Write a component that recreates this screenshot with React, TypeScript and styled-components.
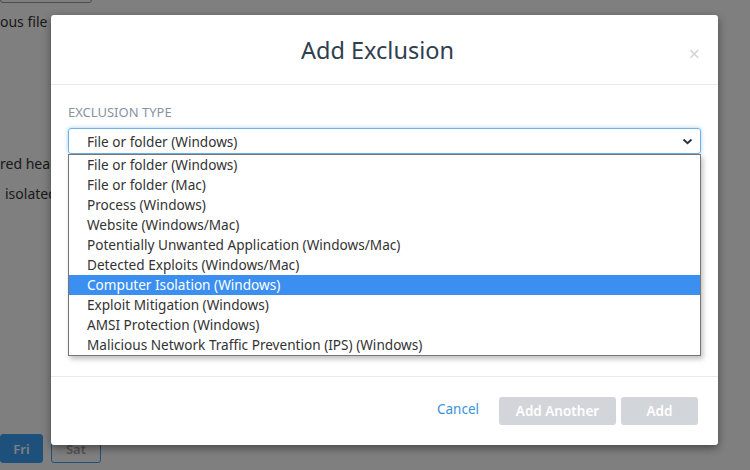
import styled, { createGlobalStyle } from 'styled-components'

const GlobalStyle = createGlobalStyle`
  html, body {
    margin: 0;
    padding: 0;
    width: 750px;
    height: 470px;
    overflow: hidden;
    background: #ffffff;
    font-family: "Noto Sans", "Open Sans", sans-serif;
  }
  * { box-sizing: border-box; }
`

const Page = styled.div`
  position: relative;
  width: 750px;
  height: 470px;
  overflow: hidden;
  display: flex;
  flex-direction: column;
  color: #333333;
  font-size: 14px;
`

const TopField = styled.div`
  margin-top: -24px;
  width: 92px;
  height: 27px;
  border: 1px solid #9a9a9a;
  border-radius: 3px;
`

const PageLine = styled.div<{ $top: number; $indent?: number }>`
  margin-top: ${p => p.$top}px;
  padding-left: ${p => p.$indent ?? 0}px;
  line-height: 20px;
  white-space: nowrap;
`

const Spacer = styled.div`
  flex: 1;
`

const DayRow = styled.div`
  display: flex;
  gap: 8px;
  padding-bottom: 7px;
`

const DayButton = styled.div<{ $active?: boolean }>`
  width: ${p => (p.$active ? 43 : 50)}px;
  height: 29px;
  display: flex;
  align-items: center;
  justify-content: center;
  border-radius: 3px;
  font-size: 13px;
  font-weight: 600;
  background: ${p => (p.$active ? '#3ca0f8' : '#ffffff')};
  color: ${p => (p.$active ? '#ffffff' : '#aaaaaa')};
  border: 1px solid #3ca0f8;
`

const Overlay = styled.div`
  position: absolute;
  inset: 0;
  background: rgba(0, 0, 0, 0.5);
  padding: 15px 0 0 51px;
`

const Modal = styled.div`
  width: 667px;
  height: 430px;
  background: #ffffff;
  border-radius: 3px;
  box-shadow: 0 3px 9px rgba(0, 0, 0, 0.45);
  display: flex;
  flex-direction: column;
`

const Header = styled.div`
  position: relative;
  height: 70px;
  border-bottom: 1px solid #e8e9eb;
  display: flex;
  align-items: center;
  justify-content: center;
`

const Title = styled.h2`
  margin: 0 14px 0 0;
  font-size: 23.5px;
  font-weight: 400;
  color: #2f3e4d;
`

const Close = styled.span`
  position: absolute;
  right: 18px;
  top: 31px;
  font-size: 20px;
  line-height: 16px;
  color: #d4d4d4;
`

const Body = styled.div`
  position: relative;
  height: 291px;
  padding: 19px 17px 0;
`

const Label = styled.div`
  font-size: 13px;
  line-height: 16px;
  color: #87939f;
  text-transform: uppercase;
  margin-bottom: 8px;
`

const SelectWrap = styled.div`
  position: relative;
`

const SelectBox = styled.div`
  height: 26px;
  border: 1px solid #6fb0ea;
  border-radius: 3px;
  box-shadow: 0 0 4px rgba(102, 175, 233, 0.6);
  display: flex;
  align-items: center;
  justify-content: space-between;
  padding: 0 7px 0 18px;
  font-size: 13.6px;
  color: #333333;
`

const List = styled.ul`
  position: absolute;
  top: 100%;
  left: 0;
  width: 633px;
  margin: 0;
  padding: 0;
  list-style: none;
  background: #ffffff;
  border: 1px solid #767676;
  box-shadow: 2px 3px 5px rgba(0, 0, 0, 0.25);
`

const Option = styled.li<{ $selected?: boolean }>`
  height: 20px;
  line-height: 20px;
  padding-left: 18px;
  font-size: 13.6px;
  white-space: nowrap;
  color: ${p => (p.$selected ? '#ffffff' : '#333333')};
  background: ${p => (p.$selected ? '#3b8ff0' : 'transparent')};
`

const Footer = styled.div`
  height: 69px;
  border-top: 1px solid #e8e9eb;
  display: flex;
  align-items: center;
  justify-content: flex-end;
  padding-right: 20px;
  gap: 5px;
`

const CancelLink = styled.a`
  font-size: 13.5px;
  color: #3a91d9;
  margin-right: 15px;
  margin-top: -4px;
  cursor: pointer;
`

const FooterButton = styled.button<{ $width: number }>`
  width: ${p => p.$width}px;
  height: 28px;
  border: none;
  border-radius: 3px;
  background: #d2d6da;
  color: #ffffff;
  font-family: inherit;
  font-size: 13.5px;
  font-weight: 600;
`

const options = [
  'File or folder (Windows)',
  'File or folder (Mac)',
  'Process (Windows)',
  'Website (Windows/Mac)',
  'Potentially Unwanted Application (Windows/Mac)',
  'Detected Exploits (Windows/Mac)',
  'Computer Isolation (Windows)',
  'Exploit Mitigation (Windows)',
  'AMSI Protection (Windows)',
  'Malicious Network Traffic Prevention (IPS) (Windows)',
]

export default function App() {
  return (
    <Page>
      <GlobalStyle />
      <TopField />
      <PageLine $top={9}>ous file types</PageLine>
      <PageLine $top={122}>red health</PageLine>
      <PageLine $top={10} $indent={5}>isolated</PageLine>
      <Spacer />
      <DayRow>
        <DayButton $active>Fri</DayButton>
        <DayButton>Sat</DayButton>
      </DayRow>

      <Overlay>
        <Modal>
          <Header>
            <Title>Add Exclusion</Title>
            <Close>×</Close>
          </Header>
          <Body>
            <Label>Exclusion type</Label>
            <SelectWrap>
              <SelectBox>
                <span>File or folder (Windows)</span>
                <svg width="11" height="7" viewBox="0 0 11 7">
                  <polyline points="1.5,1.5 5.5,5.2 9.5,1.5" fill="none" stroke="#2b3440" strokeWidth="2" />
                </svg>
              </SelectBox>
              <List>
                {options.map((o, i) => (
                  <Option key={o} $selected={i === 6}>{o}</Option>
                ))}
              </List>
            </SelectWrap>
          </Body>
          <Footer>
            <CancelLink>Cancel</CancelLink>
            <FooterButton $width={117}>Add Another</FooterButton>
            <FooterButton $width={77}>Add</FooterButton>
          </Footer>
        </Modal>
      </Overlay>
    </Page>
  )
}
